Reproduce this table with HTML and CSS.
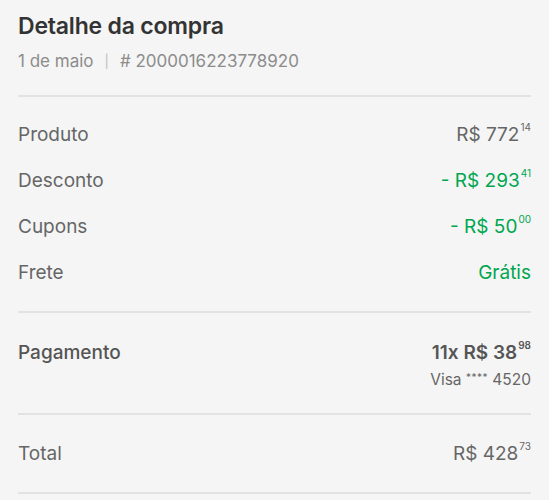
FILE: index.html
```html
<!DOCTYPE html>
<html lang="pt-BR">
<head>
<meta charset="utf-8">
<link rel="stylesheet" href="styles.css">
</head>
<body>
<div class="page">
  <header class="head">
    <h1 class="title">Detalhe da compra</h1>
    <div class="meta"><span>1 de maio</span><span class="sep">|</span><span># 2000016223778920</span></div>
  </header>
  <section class="block items">
    <div class="row"><span class="label">Produto</span><span class="value">R$ 772<sup>14</sup></span></div>
    <div class="row"><span class="label">Desconto</span><span class="value green">- R$ 293<sup>41</sup></span></div>
    <div class="row"><span class="label">Cupons</span><span class="value green">- R$ 50<sup>00</sup></span></div>
    <div class="row"><span class="label">Frete</span><span class="value green">Grátis</span></div>
  </section>
  <section class="block pay">
    <div class="row top"><span class="label medium">Pagamento</span>
      <div class="payval"><span class="value strong">11x R$ 38<sup>98</sup></span><span class="card">Visa <span class="stars">****</span> 4520</span></div>
    </div>
  </section>
  <section class="block total">
    <div class="row"><span class="label">Total</span><span class="value">R$ 428<sup>73</sup></span></div>
  </section>
</div>
</body>
</html>
```
FILE: styles.css
```css
html, body { margin: 0; background: #f5f5f5; }
body { font-family: "Inter", "Liberation Sans", sans-serif; color: #666; }
.page { padding: 11px 18px 0; }
.title { margin: 0; font-size: 23px; line-height: 30px; font-weight: 600; color: #333; letter-spacing: -0.2px; }
.meta { margin-top: 9px; font-size: 17px; line-height: 22px; color: #8c8c8c; display: flex; gap: 11px; }
.meta .sep { color: #bbb; font-size: 13px; }
.head { padding-bottom: 23px; border-bottom: 2px solid #e2e2e2; }
.block { border-bottom: 2px solid #e2e2e2; }
.items { padding: 14px 0 16px; }
.row { display: flex; justify-content: space-between; align-items: center; height: 46px; font-size: 19px; }
.row.top { align-items: flex-start; height: auto; }
.label { color: #666; }
.value { color: #666; }
.value sup { font-size: 10px; vertical-align: top; position: relative; top: -2px; margin-left: 1px; }
.green { color: #00a650; }
.medium { font-weight: 500; color: #555; }
.strong { font-weight: 600; color: #555; }
.pay { padding: 28px 0 23px; }
.payval { display: flex; flex-direction: column; align-items: flex-end; }
.card { font-size: 15.5px; line-height: 20px; margin-top: 3px; color: #666; }
.stars { font-size: 10px; vertical-align: 4px; letter-spacing: 0.5px; }
.total { padding: 15px 0 16px; }
```
